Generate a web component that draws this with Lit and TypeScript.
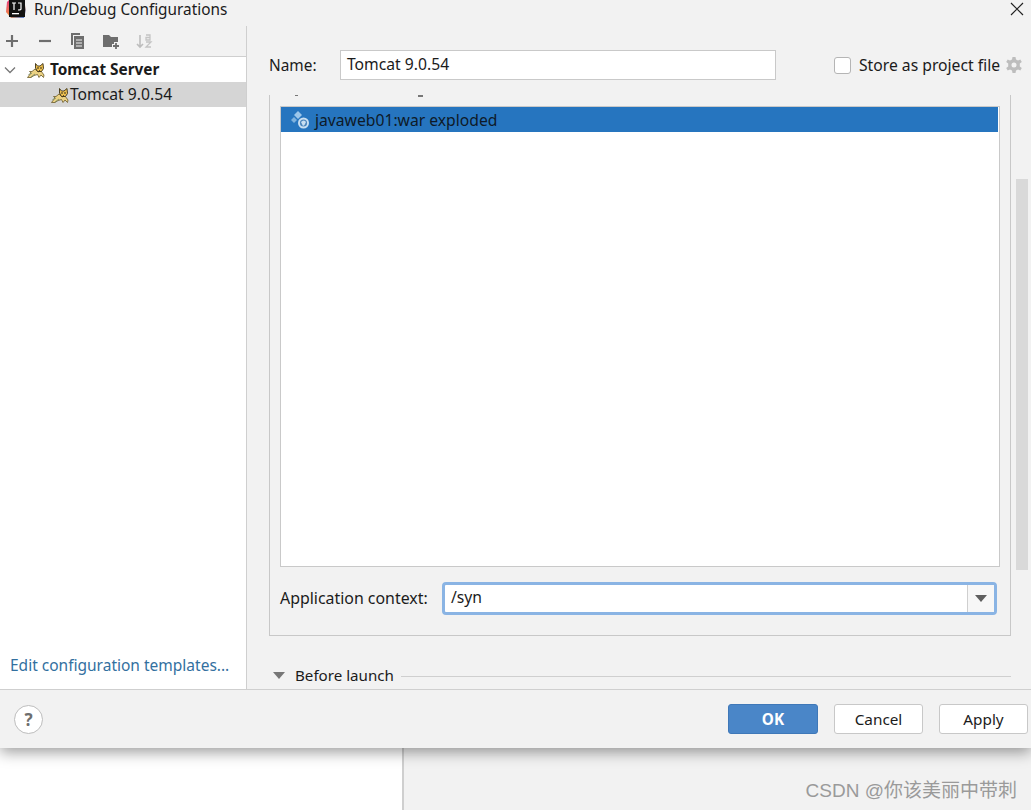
import { LitElement, html, css, svg } from "lit";
import { customElement } from "lit/decorators.js";

const cat = svg`<svg class="cat" viewBox="0 0 18 18" width="18" height="18">
  <path d="M0.5 16.5 L4 12 L2.5 10.5 L5 10.5 L8 8 L11 11 L14 10 L17 14 L16.5 16.5 L14 14 L12 16.5 L10.5 13.5 L7 14.5 L4 16.5 Z" fill="#ecd283" stroke="#6b5a2a" stroke-width=".8" stroke-linejoin="round"/>
  <path d="M8.5 2.5 L10.5 5 L13 5 L16 2.5 L16.5 7.5 L14.5 10.5 L10.5 10.5 L8.5 7 Z" fill="#eec04e" stroke="#3d3214" stroke-width=".9" stroke-linejoin="round"/>
  <circle cx="11" cy="7" r=".8" fill="#1c1c1c"/><circle cx="14" cy="7" r=".8" fill="#1c1c1c"/>
  <path d="M12.5 9 L12.5 10" stroke="#3d3214" stroke-width=".8"/>
  <path d="M1.5 13.5 L5 12 M4 16 L8 13" stroke="#7d8f66" stroke-width=".9" fill="none"/>
</svg>`;

@customElement("app-root")
export class AppRoot extends LitElement {
  static styles = css`
    :host { display: block; width: 1031px; height: 810px; position: relative; overflow: hidden; font-family: "Noto Sans", "Open Sans", sans-serif; font-size: 15.7px; color: #1b1b1b; background: #fff; }
    .dialog { height: 748px; display: flex; flex-direction: column; background: #f2f2f2; position: relative; z-index: 1; box-shadow: 0 4px 14px rgba(0,0,0,.4); }
    .title { height: 26px; flex: none; display: flex; align-items: flex-start; position: relative; }
    .logo { margin: 0 0 0 6px; flex: none; }
    .title-text { margin-left: 8px; line-height: 19px; font-size: 15.35px; }
    .close { margin-left: auto; margin-right: 6px; margin-top: 1px; flex: none; }
    .body { flex: 1; display: flex; min-height: 0; }
    .side { width: 246px; flex: none; border-right: 1px solid #cfcfcf; display: flex; flex-direction: column; }
    .tools { height: 30px; flex: none; display: flex; align-items: center; border-bottom: 1px solid #cfcfcf; padding-left: 3px; gap: 15px; box-sizing: content-box; }
    .tree { flex: 1; background: #fff; display: flex; flex-direction: column; }
    .row { height: 25px; display: flex; align-items: center; flex: none; }
    .row span { padding-bottom: 2px; }
    .row.parent { padding-left: 4px; font-weight: 700; font-size: 15.35px; }
    .row.parent .cat { margin: 0 5px 0 11px; }
    .row.child { background: #d5d5d5; padding-left: 51px; }
    .row.child .cat { margin-right: 1px; }
    .link { margin-top: auto; padding: 0 0 13px 10px; color: #33709f; font-size: 15.5px; line-height: 22px; }
    .main { flex: 1; min-width: 0; display: flex; flex-direction: column; padding-left: 22px; }
    .name { display: flex; align-items: center; height: 30px; margin-top: 24px; flex: none; }
    .name label { width: 71px; flex: none; font-size: 15.4px; }
    .text { width: 436px; height: 30px; box-sizing: border-box; border: 1px solid #c9c9c9; background: #fff; padding-left: 6px; line-height: 27px; flex: none; }
    .cb { width: 17px; height: 17px; box-sizing: border-box; margin-left: 58px; border: 1px solid #b5b5b5; border-radius: 3px; background: #fff; flex: none; }
    .store { margin-left: 8px; white-space: nowrap; }
    .gear { margin-left: 5px; flex: none; }
    .scroll { flex: 1; min-height: 0; display: flex; margin-top: 15px; overflow: hidden; }
    .content { width: 742px; flex: none; display: flex; flex-direction: column; }
    .group { height: 541px; box-sizing: border-box; flex: none; border: 1px solid #c8c8c8; border-top: 0; padding: 0 10px; display: flex; flex-direction: column; }
    .crumbs { height: 11px; flex: none; position: relative; }
    .crumbs i { position: absolute; top: 0; width: 3px; height: 1px; background: #777; }
    .crumbs i:nth-child(2) { left: 138px; width: 5px; height: 2px; }
    .crumbs i:first-child { left: 15px; }
    .list { height: 461px; flex: none; box-sizing: border-box; border: 1px solid #c9c9c9; background: #fff; }
    .sel { height: 25px; background: #2675bf; display: flex; align-items: center; padding-left: 10px; color: #0e1a28; gap: 4px; margin-right: 1px; }
    .ctx { display: flex; align-items: center; margin-top: 15px; }
    .ctx label { width: 162px; flex: none; padding-bottom: 1px; font-size: 15.9px; white-space: nowrap; }
    .combo { width: 555px; height: 33px; box-sizing: border-box; border: 3px solid #8ab4e4; border-radius: 4px; display: flex; background: #fff; flex: none; }
    .combo span { flex: 1; padding-left: 6px; line-height: 25px; }
    .combo b { width: 26px; border-left: 1px solid #cfcfcf; background: #f7f7f7; display: flex; align-items: center; justify-content: center; }
    .before { display: flex; align-items: center; margin-top: 27px; height: 24px; margin-left: 4px; font-size: 15.15px; }
    .before span { margin-left: 10px; white-space: nowrap; }
    .before hr { flex: 1; border: 0; border-top: 1px solid #cfcfcf; margin: 2px 0 0 7px; }
    .track { width: 12px; margin-left: 5px; flex: none; padding-top: 84px; margin-top: 0; }
    .thumb { height: 391px; background: #d9d9d9; }
    .foot { height: 59px; flex: none; border-top: 1px solid #cfcfcf; box-sizing: border-box; display: flex; align-items: center; padding: 0 3px 0 14px; font-size: 15.3px; }
    .help { width: 29px; height: 29px; box-sizing: border-box; border: 1px solid #bdbdbd; border-radius: 50%; background: #fff; color: #6e6e6e; font-weight: 700; font-size: 17px; display: flex; align-items: center; justify-content: center; margin-right: auto; }
    .btn { width: 89px; height: 30px; box-sizing: border-box; border: 1px solid #c8c8c8; border-radius: 3px; background: #fff; display: flex; align-items: center; justify-content: center; margin-left: 16px; }
    .btn.ok { width: 90px; background: #4a86c8; border-color: #3f78b8; color: #fff; font-weight: 700; }
    .desk { height: 62px; display: flex; }
    .desk .l { width: 402px; background: #fff; border-right: 2px solid #cfcfcf; flex: none; }
    .desk .r { flex: 1; background: #f2f2f2; }
    .mark { position: absolute; z-index: 2; right: 14px; bottom: 7px; color: #9a9a9a; font-size: 19px; line-height: 24px; font-family: "Liberation Sans", "Noto Sans CJK SC", sans-serif; white-space: nowrap; }
  `;

  render() {
    return html`
      <div class="dialog">
        <div class="title">
          <svg class="logo" width="20" height="19" viewBox="0 0 20 19">
            <defs><linearGradient id="g" x1="0" y1="0" x2="1" y2="1"><stop offset="0" stop-color="#e8388a"/><stop offset=".5" stop-color="#f08a3c"/><stop offset="1" stop-color="#3f7fe8"/></linearGradient></defs>
            <path d="M1 2 L3 0 H18 L20 10 L18 18 H5 L0 12 Z" fill="url(#g)"/>
            <rect x="3" y="0" width="16" height="17" fill="#111"/>
            <rect x="6" y="13" width="7" height="1.3" fill="#fff"/>
            <path d="M6 3 H10 M8 3 V10 M12 3 H15 V9 Q15 10 12 10" stroke="#fff" stroke-width="1.2" fill="none"/>
          </svg>
          <span class="title-text">Run/Debug Configurations</span>
          <svg class="close" width="16" height="16" viewBox="0 0 16 16"><path d="M2 2 L14 14 M14 2 L2 14" stroke="#222" stroke-width="1.2"/></svg>
        </div>
        <div class="body">
          <div class="side">
            <div class="tools">
              <svg width="18" height="18" viewBox="0 0 18 18"><path d="M9 3 V15 M3 9 H15" stroke="#6e6e6e" stroke-width="2.2"/></svg>
              <svg width="18" height="18" viewBox="0 0 18 18"><path d="M3 9 H15" stroke="#6e6e6e" stroke-width="2.2"/></svg>
              <svg width="18" height="18" viewBox="0 0 18 18"><path d="M2 1 H11 V3 H4 V13 H2 Z M5 4 H15 V17 H5 Z" fill="#6e6e6e"/><path d="M7 8 H13 M7 11 H13 M7 14 H13" stroke="#f2f2f2"/></svg>
              <svg width="18" height="18" viewBox="0 0 18 18"><path d="M1 3 H7 L9 5 H16 V15 H1 Z" fill="#6e6e6e"/><path d="M14 10 V18 M10 14 H18" stroke="#f2f2f2" stroke-width="4"/><path d="M14 11 V17 M11 14 H17" stroke="#6e6e6e" stroke-width="1.8"/></svg>
              <svg width="18" height="18" viewBox="0 0 18 18"><path d="M5 3 V15 M2 12 L5 15 L8 12" stroke="#bdbdbd" stroke-width="1.6" fill="none"/><path d="M11 3 H15 V8 H11 V5.5 H15 M11 10 H16 L11 15 H16" stroke="#c4c4c4" stroke-width="1.3" fill="none"/></svg>
            </div>
            <div class="tree">
              <div class="row parent">
                <svg width="12" height="12" viewBox="0 0 12 12"><path d="M1 3.5 L6 8.5 L11 3.5" stroke="#777" stroke-width="1.3" fill="none"/></svg>
                ${cat}<span>Tomcat Server</span>
              </div>
              <div class="row child">${cat}<span>Tomcat 9.0.54</span></div>
              <div class="link">Edit configuration templates...</div>
            </div>
          </div>
          <div class="main">
            <div class="name">
              <label>Name:</label>
              <div class="text">Tomcat 9.0.54</div>
              <div class="cb"></div>
              <span class="store">Store as project file</span>
              <svg class="gear" width="18" height="18" viewBox="0 0 18 18"><path fill="#bdbdbd" fill-rule="evenodd" d="M7.5 1 H10.5 L11 3.5 L13 4.5 L15.3 3.4 L16.8 6 L14.8 7.6 V10.4 L16.8 12 L15.3 14.6 L13 13.5 L11 14.5 L10.5 17 H7.5 L7 14.5 L5 13.5 L2.7 14.6 L1.2 12 L3.2 10.4 V7.6 L1.2 6 L2.7 3.4 L5 4.5 L7 3.5 Z M9 6.5 A2.5 2.5 0 1 0 9 11.5 A2.5 2.5 0 1 0 9 6.5 Z"/></svg>
            </div>
            <div class="scroll">
              <div class="content">
                <div class="group">
                  <div class="crumbs"><i></i><i></i></div>
                  <div class="list">
                    <div class="sel">
                      <svg width="20" height="20" viewBox="0 0 20 20"><path d="M7 1 L11 5 L7 9 L3 5 Z" fill="#9cc6ea"/><path d="M3 7 L6 10 L3 13 L0 10 Z" fill="#7fb2de"/><circle cx="12.5" cy="13" r="5.5" fill="#c9dff2"/><circle cx="12.5" cy="13" r="3.6" fill="#4c86bd"/><path d="M10 12 Q13 9 15 12 Q14 15 12 16" fill="#c9dff2"/></svg>
                      <span>javaweb01:war exploded</span>
                    </div>
                  </div>
                  <div class="ctx">
                    <label>Application context:</label>
                    <div class="combo"><span>/syn</span><b><svg width="12" height="7" viewBox="0 0 12 7"><path d="M0 0 H12 L6 7 Z" fill="#5f5f5f"/></svg></b></div>
                  </div>
                </div>
                <div class="before">
                  <svg width="12" height="7" viewBox="0 0 12 7"><path d="M0 0 H12 L6 7 Z" fill="#777"/></svg>
                  <span>Before launch</span><hr />
                </div>
              </div>
              <div class="track"><div class="thumb"></div></div>
            </div>
          </div>
        </div>
        <div class="foot">
          <div class="help">?</div>
          <div class="btn ok">OK</div>
          <div class="btn">Cancel</div>
          <div class="btn">Apply</div>
        </div>
      </div>
      <div class="desk"><div class="l"></div><div class="r"></div></div>
      <div class="mark">CSDN @你该美丽中带刺</div>
    `;
  }
}
